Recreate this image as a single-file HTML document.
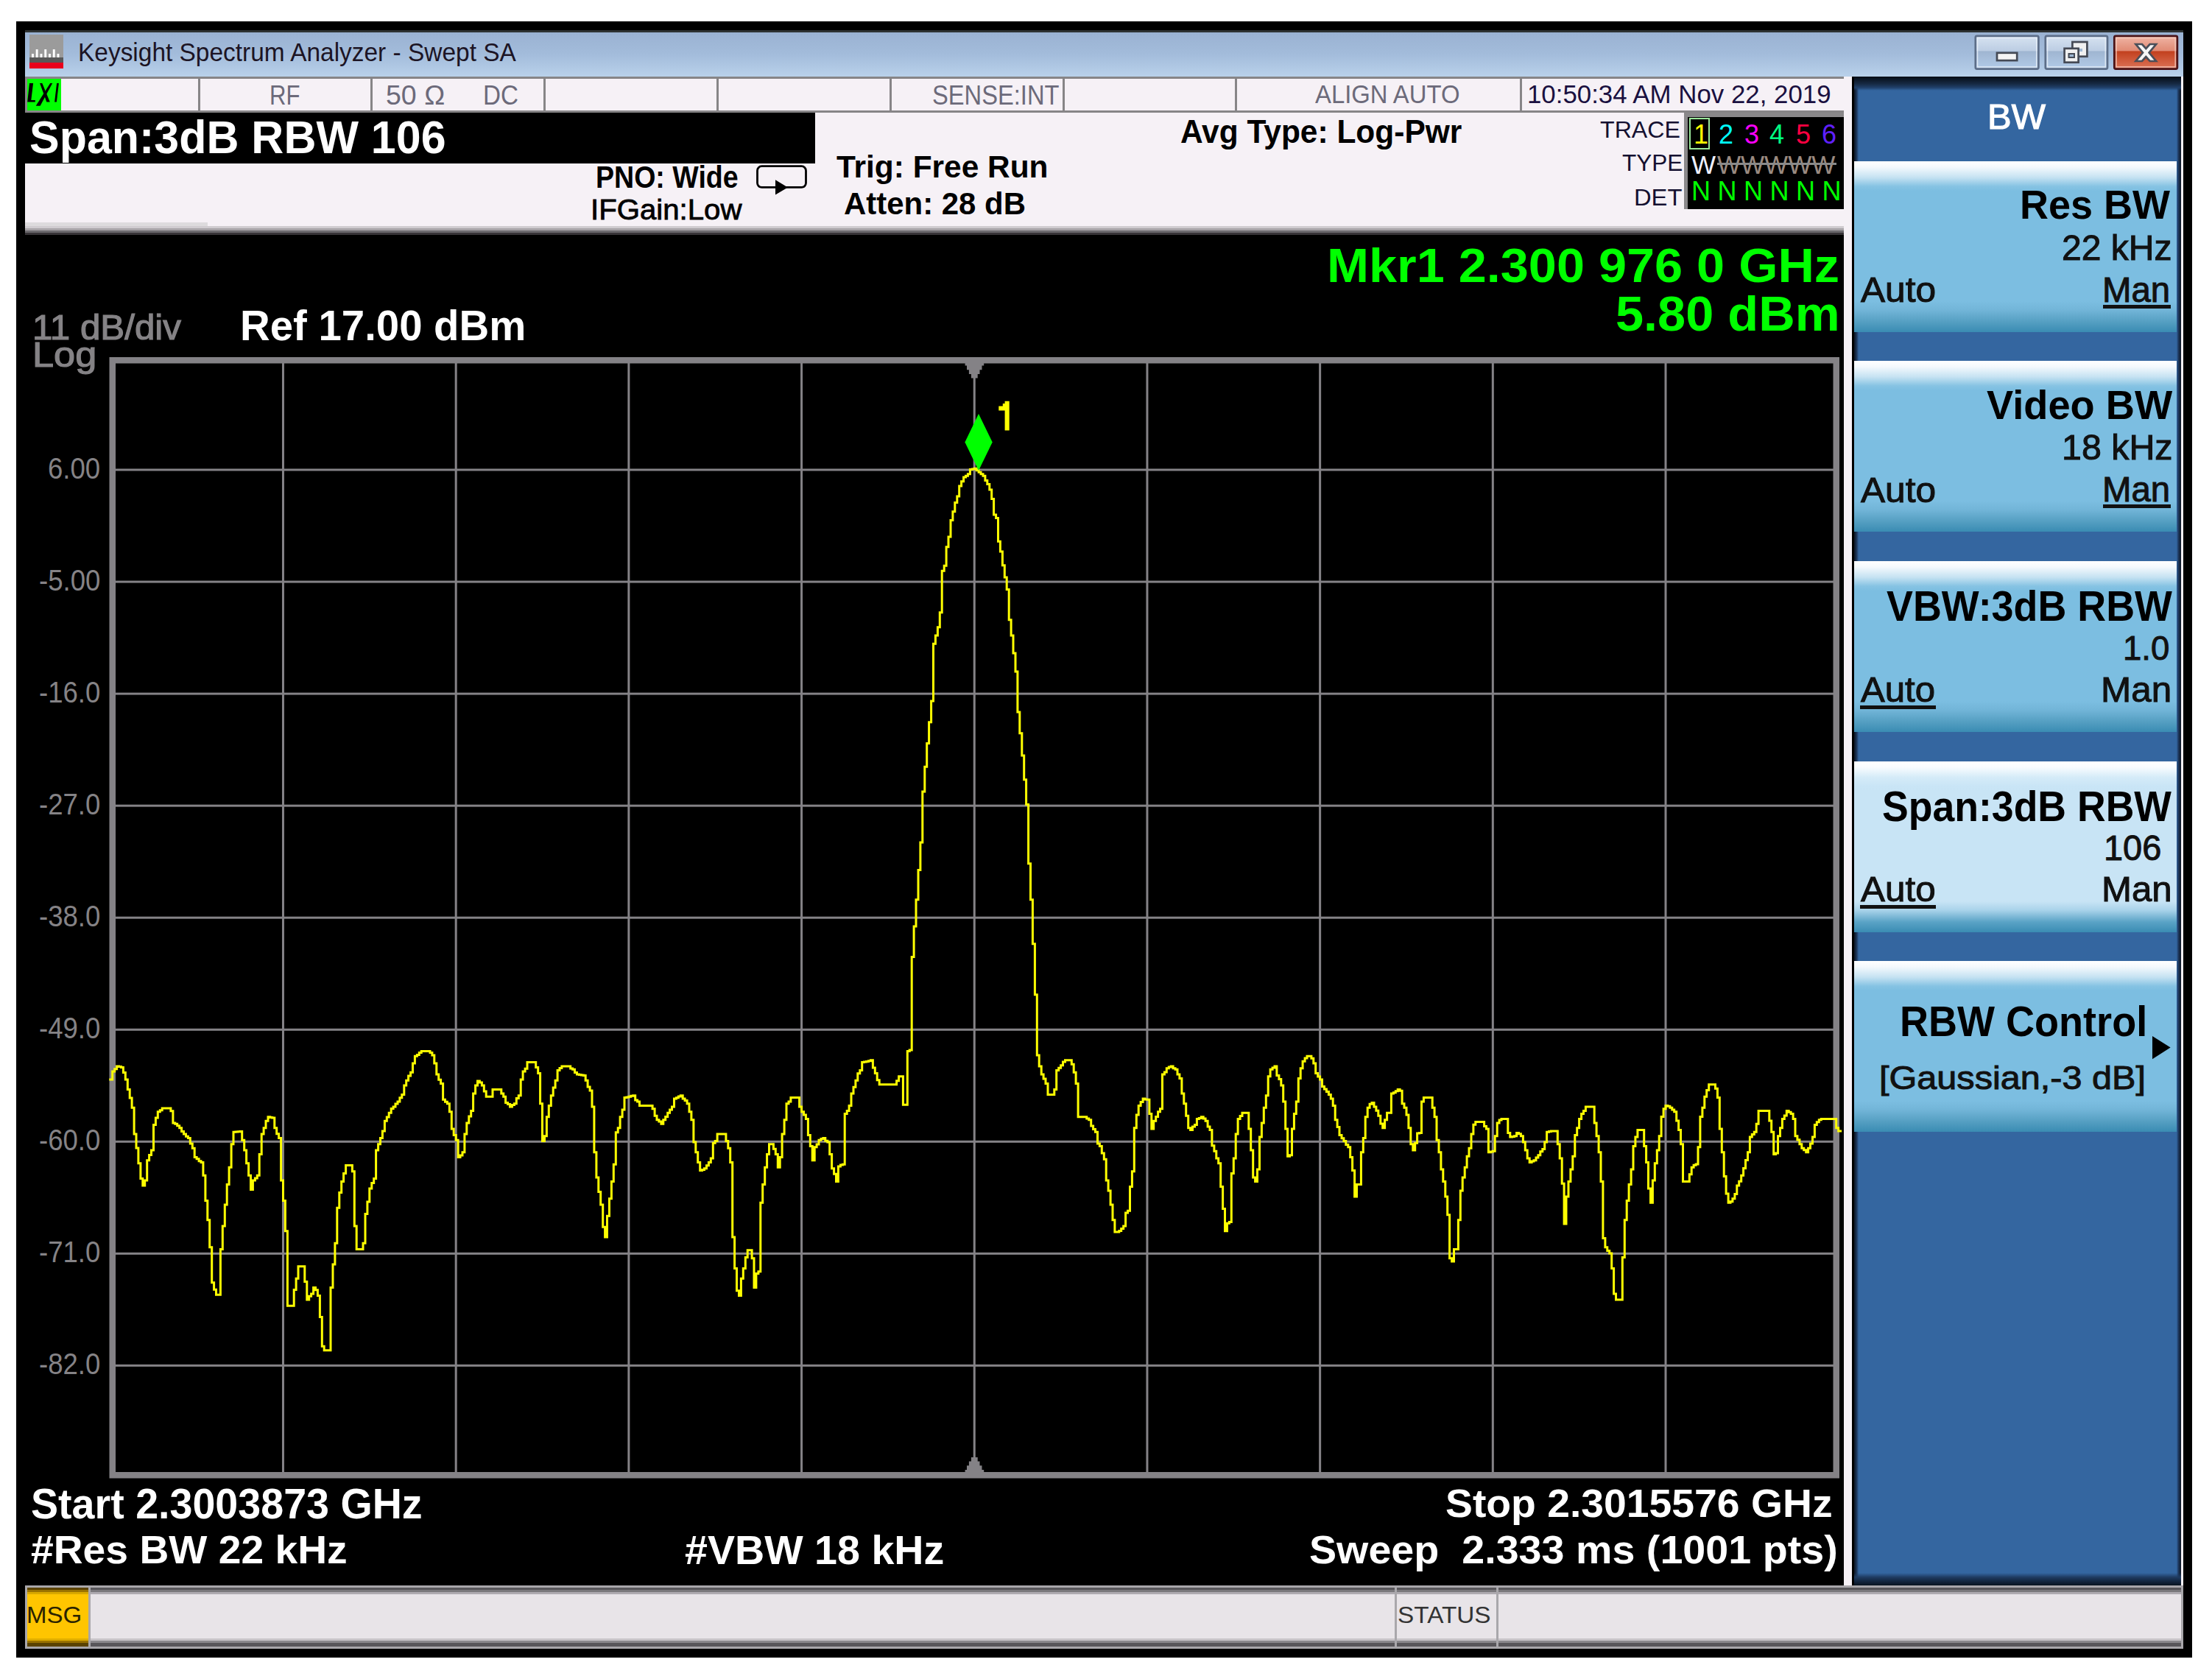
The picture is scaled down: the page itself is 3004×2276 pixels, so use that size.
<!DOCTYPE html>
<html><head><meta charset="utf-8"><style>
html,body{margin:0;padding:0;width:3004px;height:2276px;overflow:hidden;background:#fff;}
body{position:relative;font-family:"Liberation Sans",sans-serif;}
.a{position:absolute;}
.t{position:absolute;white-space:pre;line-height:1;transform-origin:0 0;font-family:"Liberation Sans",sans-serif;}
.btn{position:absolute;left:2518px;width:438px;height:232px;
background:linear-gradient(to bottom,#ffffff 0px,#f4f9fd 8px,#c5e2f2 22px,#86c3e3 34px,#7cbee1 40px,#7cbee1 190px,#72b5d8 202px,#559fc2 218px,#3a8cb3 232px);}
.btn.sel{background:linear-gradient(to bottom,#ffffff 0px,#f8fcff 8px,#d4ebf8 22px,#c9e5f6 34px,#c8e4f5 40px,#c8e4f5 190px,#a9d3ea 202px,#5aa3c6 218px,#3a8cb3 232px);}
</style></head><body>
<!-- frame -->
<div class="a" style="left:22px;top:29px;width:2955px;height:2222px;background:#000"></div>
<!-- title bar -->
<div class="a" style="left:34px;top:41px;width:2931px;height:3px;background:#2e3232"></div>
<div class="a" style="left:34px;top:44px;width:2931px;height:60px;background:linear-gradient(to bottom,#9ab2d2,#a3bcdb 50%,#b9d1ea)"></div>
<!-- app icon -->
<div class="a" style="left:40px;top:47px;width:46px;height:46px;background:#9b9b9b"></div>
<div class="a" style="left:40px;top:78px;width:46px;height:6.5px;background:#585858"></div>
<div class="a" style="left:40px;top:84.5px;width:46px;height:8.5px;background:#e8001c"></div>
<svg class="a" style="left:0;top:0" width="100" height="100">
<rect x="43" y="73" width="2.9" height="5" fill="#fff"/><rect x="48.7" y="67" width="2.9" height="11" fill="#fff"/>
<rect x="54.5" y="73" width="2.9" height="5" fill="#fff"/><rect x="60.3" y="67" width="2.9" height="11" fill="#fff"/>
<rect x="66" y="73" width="2.9" height="5" fill="#fff"/><rect x="71.8" y="67" width="2.9" height="11" fill="#fff"/>
<rect x="77.5" y="73" width="2.9" height="5" fill="#fff"/>
</svg>
<!-- window buttons -->
<svg class="a" style="left:0;top:0" width="3004" height="110">
<defs>
<linearGradient id="wb" x1="0" y1="0" x2="0" y2="1"><stop offset="0" stop-color="#d7e3f1"/><stop offset="0.45" stop-color="#bccde3"/><stop offset="0.47" stop-color="#9fb5d1"/><stop offset="1" stop-color="#b2cbe8"/></linearGradient>
<linearGradient id="cb" x1="0" y1="0" x2="0" y2="1"><stop offset="0" stop-color="#f0b5a5"/><stop offset="0.45" stop-color="#e08a74"/><stop offset="0.47" stop-color="#c2401e"/><stop offset="1" stop-color="#dc7458"/></linearGradient>
</defs>
<rect x="2682.8" y="48.8" width="85.6" height="44.8" rx="2" fill="url(#wb)" stroke="#5d6e88" stroke-width="2.7"/>
<rect x="2685.5" y="51.5" width="80.2" height="39.4" fill="none" stroke="#e8f0f8" stroke-width="1.5" opacity="0.8"/>
<rect x="2777.8" y="48.8" width="84.2" height="44.8" rx="2" fill="url(#wb)" stroke="#5d6e88" stroke-width="2.7"/>
<rect x="2780.5" y="51.5" width="78.8" height="39.4" fill="none" stroke="#e8f0f8" stroke-width="1.5" opacity="0.8"/>
<rect x="2871.3" y="48.8" width="85.6" height="44.8" rx="2" fill="url(#cb)" stroke="#4a1418" stroke-width="2.7"/>
<rect x="2874" y="51.5" width="80.2" height="39.4" fill="none" stroke="#f6d0c4" stroke-width="1.5" opacity="0.8"/>
<rect x="2712" y="71.8" width="27.2" height="10.3" fill="#f4f4f4" stroke="#454a55" stroke-width="2.7"/>
<rect x="2814.4" y="57" width="20" height="19.7" fill="#f0f0f0" stroke="#454a55" stroke-width="2.7"/>
<rect x="2823" y="66" width="5" height="4" fill="#9fb8d4"/>
<rect x="2803.6" y="65.8" width="19" height="18.9" fill="#f0f0f0" stroke="#454a55" stroke-width="2.7"/>
<rect x="2809.5" y="73" width="7.5" height="5" fill="#9fb8d4" stroke="#454a55" stroke-width="2"/>
<path d="M2900.5,60 h8.5 l5.3,6 l5.3,-6 h8.5 l-9.5,11.5 l9.5,11.5 h-8.5 l-5.3,-6 l-5.3,6 h-8.5 l9.5,-11.5 z" fill="#f6f6f6" stroke="#4a4e58" stroke-width="2.7" stroke-linejoin="miter"/>
</svg>
<!-- status row -->
<div class="a" style="left:34px;top:104px;width:2481px;height:3px;background:#878587"></div>
<div class="a" style="left:34px;top:107px;width:2470px;height:44px;background:#f6f1f6"></div>
<div class="a" style="left:34px;top:107px;width:3px;height:46px;background:#878587"></div>
<div class="a" style="left:34px;top:150px;width:2470px;height:3px;background:#878587"></div>
<div class="a" style="left:37px;top:107px;width:46px;height:43px;background:#00ff00"></div>
<svg class="a" style="left:0;top:0" width="100" height="160">
<path d="M40,113 H45.1 L42.3,136 H47.8 V138.6 H37.2 Z" fill="#000"/>
<path d="M54.1,113 H57.3 L67.8,138.4 H63.3 Z" fill="#000"/>
<path d="M68.2,113 H71.2 L54.6,143.8 H48.7 Z" fill="#000"/>
<path d="M77.1,113 H79.9 L76.9,138.4 H74.1 Z" fill="#000"/>
</svg>
<div style="position:absolute;left:268.5px;top:107px;width:3px;height:44px;background:#878587"></div>
<div style="position:absolute;left:502.5px;top:107px;width:3px;height:44px;background:#878587"></div>
<div style="position:absolute;left:737.5px;top:107px;width:3px;height:44px;background:#878587"></div>
<div style="position:absolute;left:972.5px;top:107px;width:3px;height:44px;background:#878587"></div>
<div style="position:absolute;left:1207.5px;top:107px;width:3px;height:44px;background:#878587"></div>
<div style="position:absolute;left:1442.5px;top:107px;width:3px;height:44px;background:#878587"></div>
<div style="position:absolute;left:1676.5px;top:107px;width:3px;height:44px;background:#878587"></div>
<div style="position:absolute;left:2063.5px;top:107px;width:3px;height:44px;background:#878587"></div>
<!-- header area -->
<div class="a" style="left:34px;top:153px;width:2470px;height:166px;background:#f6f1f6"></div>
<div class="a" style="left:34px;top:152.6px;width:1073px;height:69.2px;background:#000"></div>
<div class="a" style="left:34px;top:302px;width:248px;height:5px;background:#dddbdd"></div>
<div class="a" style="left:34px;top:307px;width:2470px;height:12px;background:linear-gradient(to bottom,#d0ccd0 0,#d0ccd0 3px,#a8a4a8 3px,#a8a4a8 6px,#6c6a6e 6px,#6c6a6e 9px,#383438 9px)"></div>
<!-- sweep icon -->
<svg class="a" style="left:0;top:0" width="1200" height="320">
<rect x="1028.5" y="225.7" width="66" height="28.7" rx="6" ry="6" fill="none" stroke="#000" stroke-width="2.8"/>
<path d="M1053,244.2 L1069.9,254.4 L1053,264.5 Z" fill="#000"/>
</svg>
<!-- trace box -->
<div class="a" style="left:2286.7px;top:153px;width:217.3px;height:131.3px;background:#8a888a"></div>
<div class="a" style="left:2291.6px;top:159px;width:212.4px;height:125.3px;background:#000"></div>
<div class="a" style="left:2293.5px;top:160px;width:28.8px;height:42.5px;border:2.5px solid #9be89b;box-sizing:border-box;"></div>
<div class="t" style="left:2300px;top:165px;font-size:36px;color:#ffff00">1</div>
<div class="t" style="left:2334px;top:165px;font-size:36px;color:#00ffff">2</div>
<div class="t" style="left:2369px;top:165px;font-size:36px;color:#ff00ff">3</div>
<div class="t" style="left:2403px;top:165px;font-size:36px;color:#00ff80">4</div>
<div class="t" style="left:2439px;top:165px;font-size:36px;color:#ff0040">5</div>
<div class="t" style="left:2474px;top:165px;font-size:36px;color:#6020ff">6</div>
<div class="t" style="left:2297px;top:206px;font-size:35px;color:#f0f0ff">W</div>
<div class="t" style="left:2332px;top:206px;font-size:35px;color:#9a8a80;transform:scaleX(0.97)">WWWWW</div>
<div class="a" style="left:2332px;top:221px;width:162px;height:2.5px;background:#8a8a8a"></div>
<div class="t" style="left:2297px;top:242px;font-size:36px;color:#00ff00;letter-spacing:9.5px">NNNNNN</div>
<!-- graph svg -->
<svg class="a" style="left:0;top:0" width="3004" height="2276">
<rect x="382.99" y="493" width="3" height="1507" fill="#848286"/>
<rect x="617.68" y="493" width="3" height="1507" fill="#848286"/>
<rect x="852.37" y="493" width="3" height="1507" fill="#848286"/>
<rect x="1087.06" y="493" width="3" height="1507" fill="#848286"/>
<rect x="1321.75" y="493" width="3" height="1507" fill="#848286"/>
<rect x="1556.44" y="493" width="3" height="1507" fill="#848286"/>
<rect x="1791.13" y="493" width="3" height="1507" fill="#848286"/>
<rect x="2025.82" y="493" width="3" height="1507" fill="#848286"/>
<rect x="2260.51" y="493" width="3" height="1507" fill="#848286"/>
<rect x="157" y="636.50" width="2333" height="3" fill="#848286"/>
<rect x="157" y="788.55" width="2333" height="3" fill="#848286"/>
<rect x="157" y="940.60" width="2333" height="3" fill="#848286"/>
<rect x="157" y="1092.65" width="2333" height="3" fill="#848286"/>
<rect x="157" y="1244.70" width="2333" height="3" fill="#848286"/>
<rect x="157" y="1396.75" width="2333" height="3" fill="#848286"/>
<rect x="157" y="1548.80" width="2333" height="3" fill="#848286"/>
<rect x="157" y="1700.85" width="2333" height="3" fill="#848286"/>
<rect x="157" y="1852.90" width="2333" height="3" fill="#848286"/>
<path d="M148.5,485 H2498 V2007.6 H148.5 Z M157,493.5 V1999 H2489.5 V493.5 Z" fill="#848286" fill-rule="evenodd"/>
<path d="M1310.6,493 L1310.6,493 L1310.6,496.4 L1313,496.4 L1313,502.2 L1315.9,502.2 L1315.9,507.9 L1318.9,507.9 L1318.9,513.6 L1327.7,513.6 L1327.7,507.9 L1330.5,507.9 L1330.5,502.2 L1333.5,502.2 L1333.5,496.4 L1336.2,496.4 L1336.2,493 Z" fill="#848286"/>
<path d="M1310.6,1999.5 L1310.6,1999.5 L1310.6,1996.1 L1313,1996.1 L1313,1990.3 L1315.9,1990.3 L1315.9,1984.5 L1318.9,1984.5 L1318.9,1978.9 L1327.7,1978.9 L1327.7,1984.5 L1330.5,1984.5 L1330.5,1990.3 L1333.5,1990.3 L1333.5,1996.1 L1336.2,1996.1 L1336.2,1999.5 Z" fill="#848286"/>
<path d="M149.8,1465.9H152.7V1455.0H155.7V1451.7H158.6V1448.0H161.5V1448.5H164.5V1449.4H167.4V1456.6H170.3V1465.9H173.3V1479.6H176.2V1490.9H179.1V1504.3H182.1V1540.0H185.0V1559.0H187.9V1579.8H190.9V1600.4H193.8V1610.0H196.7V1603.0H199.7V1575.7H202.6V1568.4H205.5V1562.0H208.5V1527.6H211.4V1518.0H214.3V1509.8H217.3V1507.8H220.2V1505.0H223.1V1505.0H226.1V1505.0H229.0V1505.0H231.9V1508.7H234.9V1524.9H237.8V1526.3H240.7V1528.8H243.7V1531.8H246.6V1536.4H249.5V1540.0H252.5V1543.2H255.4V1545.5H258.3V1553.0H261.3V1559.2H264.2V1571.6H267.1V1573.8H270.1V1576.7H273.0V1578.4H275.9V1596.3H278.9V1630.6H281.8V1656.7H284.7V1693.7H287.7V1741.8H290.6V1751.3H293.5V1758.2H296.5V1758.2H299.4V1696.5H302.3V1664.9H305.3V1636.0H308.2V1608.6H311.1V1585.3H314.1V1553.7H317.0V1537.3H319.9V1537.1H322.9V1536.8H325.8V1536.4H328.7V1548.2H331.7V1562.0H334.6V1579.8H337.6V1596.3H340.5V1615.5H343.4V1603.1H346.4V1600.1H349.3V1596.3H352.2V1567.4H355.2V1540.0H358.1V1531.8H361.0V1522.2H364.0V1516.7H366.9V1517.4H369.8V1518.0H372.8V1531.8H375.7V1539.7H378.6V1545.5H381.6V1603.1H384.5V1630.6H387.4V1671.8H390.4V1773.3H393.3V1773.3H396.2V1773.3H399.2V1751.4H402.1V1736.3H405.0V1719.8H408.0V1719.8H410.9V1719.8H413.8V1740.4H416.8V1765.0H419.7V1760.3H422.6V1756.9H425.6V1748.6H428.5V1751.8H431.4V1759.6H434.4V1788.4H437.3V1828.2H440.2V1833.7H443.2V1833.7H446.1V1833.7H449.0V1748.6H452.0V1717.0H454.9V1688.2H457.8V1640.2H460.8V1619.6H463.7V1604.5H466.6V1593.5H469.6V1582.5H472.5V1582.5H475.4V1582.5H478.4V1590.8H481.3V1664.9H484.2V1696.5H487.2V1696.5H490.1V1696.5H493.0V1688.2H496.0V1648.4H498.9V1632.0H501.8V1614.1H504.8V1606.4H507.7V1600.4H510.6V1562.0H513.6V1553.7H516.5V1545.5H519.4V1535.9H522.4V1522.2H525.3V1516.9H528.2V1511.2H531.2V1505.6H534.1V1502.9H537.0V1498.9H540.0V1496.1H542.9V1490.7H545.8V1486.5H548.8V1474.1H551.7V1467.3H554.6V1460.9H557.6V1456.3H560.5V1443.9H563.4V1434.3H566.4V1432.5H569.3V1429.5H572.2V1427.4H575.2V1427.4H578.1V1427.4H581.0V1427.4H584.0V1429.5H586.9V1432.9H589.8V1443.9H592.8V1459.0H595.7V1466.2H598.6V1471.4H601.6V1493.3H604.5V1496.2H607.4V1498.8H610.4V1509.8H613.3V1533.1H616.2V1541.6H619.2V1548.2H622.1V1571.6H625.0V1569.1H628.0V1564.7H630.9V1540.0H633.8V1524.9H636.8V1515.9H639.7V1508.4H642.6V1485.1H645.6V1474.1H648.5V1468.1H651.4V1470.1H654.4V1474.1H657.3V1482.1H660.2V1489.2H663.2V1489.2H666.1V1489.2H669.0V1479.6H672.0V1479.6H674.9V1479.6H677.8V1479.6H680.8V1485.1H683.7V1489.2H686.6V1497.4H689.6V1499.5H692.5V1502.9H695.4V1500.4H698.4V1498.8H701.3V1491.4H704.3V1487.8H707.2V1465.9H710.1V1454.9H713.1V1451.3H716.0V1442.5H718.9V1442.5H721.9V1442.5H724.8V1442.5H727.7V1449.4H730.7V1457.6H733.6V1498.8H736.5V1549.6H739.5V1542.7H742.4V1516.7H745.3V1501.6H748.3V1487.8H751.2V1476.9H754.1V1467.3H757.1V1453.5H760.0V1450.6H762.9V1448.0H765.9V1448.0H768.8V1448.0H771.7V1448.0H774.7V1450.9H777.6V1452.2H780.5V1456.4H783.5V1459.0H786.4V1459.5H789.3V1460.0H792.3V1460.4H795.2V1467.3H798.1V1476.0H801.1V1481.0H804.0V1503.1H806.9V1564.7H809.9V1599.0H812.8V1618.5H815.7V1636.1H818.7V1666.3H821.6V1680.0H824.5V1651.2H827.5V1627.8H830.4V1604.5H833.3V1581.2H836.3V1537.7H839.2V1531.8H842.1V1516.7H845.1V1507.1H848.0V1490.6H850.9V1490.0H853.9V1489.2H856.8V1488.3H859.7V1487.8H862.7V1493.9H865.6V1496.1H868.5V1501.6H871.5V1501.6H874.4V1501.6H877.3V1501.6H880.3V1501.6H883.2V1501.6H886.1V1505.7H889.1V1515.3H892.0V1520.8H894.9V1522.9H897.9V1526.3H900.8V1520.8H903.7V1516.4H906.7V1511.2H909.6V1506.9H912.5V1502.9H915.5V1492.0H918.4V1490.7H921.3V1488.9H924.3V1487.8H927.2V1492.0H930.1V1494.5H933.1V1498.8H936.0V1509.8H938.9V1520.8H941.9V1551.0H944.8V1564.7H947.7V1578.4H950.7V1589.4H953.6V1588.6H956.5V1586.7H959.5V1582.7H962.4V1578.4H965.3V1572.9H968.3V1552.2H971.2V1549.6H974.1V1540.0H977.1V1540.0H980.0V1540.0H982.9V1540.0H985.9V1549.6H988.8V1559.2H991.7V1578.4H994.7V1680.0H997.6V1722.5H1000.5V1752.7H1003.5V1759.6H1006.4V1736.3H1009.3V1722.5H1012.3V1707.4H1015.2V1697.8H1018.1V1697.8H1021.1V1708.8H1024.0V1748.6H1026.9V1729.4H1029.9V1726.7H1032.8V1633.3H1035.7V1608.6H1038.7V1585.3H1041.6V1567.4H1044.5V1553.7H1047.5V1553.7H1050.4V1560.3H1053.3V1567.4H1056.3V1585.3H1059.2V1571.6H1062.1V1540.0H1065.1V1520.8H1068.0V1498.8H1071.0V1495.9H1073.9V1490.6H1076.8V1490.6H1079.8V1490.6H1082.7V1490.6H1085.6V1502.9H1088.6V1509.8H1091.5V1514.1H1094.4V1519.4H1097.4V1541.4H1100.3V1556.5H1103.2V1575.7H1106.2V1557.8H1109.1V1554.0H1112.0V1548.2H1115.0V1546.6H1117.9V1545.5H1120.8V1549.3H1123.8V1551.0H1126.7V1567.4H1129.6V1586.7H1132.6V1594.2H1135.5V1604.5H1138.4V1583.9H1141.4V1582.1H1144.3V1581.2H1147.2V1512.5H1150.2V1508.4H1153.1V1501.6H1156.0V1485.1H1159.0V1476.3H1161.9V1467.3H1164.8V1457.8H1167.8V1453.5H1170.7V1442.5H1173.6V1442.1H1176.6V1441.4H1179.5V1440.7H1182.4V1439.8H1185.4V1450.1H1188.3V1457.6H1191.2V1466.7H1194.2V1472.7H1197.1V1472.7H1200.0V1472.7H1203.0V1472.7H1205.9V1472.7H1208.8V1472.7H1211.8V1472.7H1214.7V1472.7H1217.6V1467.8H1220.6V1461.8H1223.5V1461.8H1226.4V1500.2H1229.4V1500.2H1232.3V1427.4H1235.2V1426.1H1238.2V1299.4H1241.1V1258.0H1244.0V1221.7H1247.0V1181.6H1249.9V1144.0H1252.8V1075.1H1255.8V1041.3H1258.7V1009.6H1261.6V980.8H1264.6V952.0H1267.5V874.3H1270.4V863.0H1273.4V851.8H1276.3V831.7H1279.2V775.3H1282.2V768.3H1285.1V742.8H1288.0V729.0H1291.0V706.4H1293.9V694.7H1296.8V682.6H1299.8V673.9H1302.7V660.1H1305.6V653.8H1308.6V648.1H1311.5V646.3H1314.4V643.8H1317.4V637.5H1320.3V636.9H1323.2V636.3H1326.2V638.8H1329.1V641.3H1332.0V643.7H1335.0V646.3H1337.9V652.6H1340.8V657.6H1343.8V665.1H1346.7V677.6H1349.6V698.9H1352.6V703.5H1355.5V735.3H1358.4V749.0H1361.4V767.8H1364.3V784.1H1367.2V800.4H1370.2V841.7H1373.1V863.0H1376.0V886.9H1379.0V911.9H1381.9V967.0H1384.8V995.8H1387.8V1025.9H1390.7V1058.8H1393.6V1092.6H1396.6V1172.8H1399.5V1221.7H1402.4V1281.8H1405.4V1350.7H1408.3V1432.9H1411.2V1448.0H1414.2V1459.0H1417.1V1465.0H1420.0V1471.4H1423.0V1486.5H1425.9V1486.5H1428.8V1486.5H1431.8V1479.6H1434.7V1453.5H1437.7V1450.3H1440.6V1446.7H1443.5V1442.1H1446.5V1439.8H1449.4V1439.8H1452.3V1439.8H1455.3V1445.3H1458.2V1456.3H1461.1V1471.4H1464.1V1516.7H1467.0V1516.7H1469.9V1516.7H1472.9V1516.7H1475.8V1519.0H1478.7V1520.8H1481.7V1529.0H1484.6V1533.4H1487.5V1537.3H1490.5V1552.9H1493.4V1556.5H1496.3V1566.1H1499.3V1574.3H1502.2V1603.1H1505.1V1616.9H1508.1V1636.1H1511.0V1656.7H1513.9V1673.1H1516.9V1673.1H1519.8V1671.4H1522.7V1668.5H1525.7V1664.9H1528.6V1647.0H1531.5V1644.3H1534.5V1611.4H1537.4V1590.8H1540.3V1531.8H1543.3V1513.9H1546.2V1501.6H1549.1V1496.5H1552.1V1492.0H1555.0V1492.9H1557.9V1493.3H1560.9V1512.5H1563.8V1533.1H1566.7V1522.2H1569.7V1516.6H1572.6V1509.8H1575.5V1505.7H1578.5V1459.0H1581.4V1455.9H1584.3V1450.8H1587.3V1449.1H1590.2V1448.0H1593.1V1450.8H1596.1V1452.2H1599.0V1459.0H1601.9V1464.5H1604.9V1485.1H1607.8V1498.8H1610.7V1515.3H1613.7V1531.8H1616.6V1534.5H1619.5V1530.1H1622.5V1527.6H1625.4V1519.4H1628.3V1518.5H1631.3V1516.7H1634.2V1518.9H1637.1V1522.2H1640.1V1529.9H1643.0V1534.5H1645.9V1555.8H1648.9V1563.3H1651.8V1572.9H1654.7V1579.8H1657.7V1611.4H1660.6V1641.6H1663.5V1671.8H1666.5V1661.3H1669.4V1659.4H1672.3V1593.5H1675.3V1572.9H1678.2V1540.0H1681.1V1519.4H1684.1V1515.5H1687.0V1511.2H1689.9V1511.2H1692.9V1511.2H1695.8V1533.1H1698.7V1562.0H1701.7V1599.0H1704.6V1604.5H1707.5V1588.0H1710.5V1544.1H1713.4V1524.9H1716.3V1504.3H1719.3V1487.8H1722.2V1461.8H1725.1V1452.2H1728.1V1449.9H1731.0V1448.0H1733.9V1460.4H1736.9V1465.6H1739.8V1474.1H1742.7V1496.1H1745.7V1533.1H1748.6V1570.2H1751.5V1568.8H1754.5V1533.1H1757.4V1512.5H1760.3V1496.1H1763.3V1464.5H1766.2V1450.8H1769.1V1441.2H1772.1V1437.1H1775.0V1434.3H1777.9V1434.3H1780.9V1437.2H1783.8V1443.9H1786.7V1457.6H1789.7V1462.0H1792.6V1465.9H1795.5V1475.5H1798.5V1479.0H1801.4V1482.4H1804.4V1486.6H1807.3V1492.0H1810.2V1501.6H1813.2V1520.8H1816.1V1530.4H1819.0V1541.4H1822.0V1545.8H1824.9V1549.6H1827.8V1554.5H1830.8V1557.8H1833.7V1571.6H1836.6V1589.4H1839.6V1625.1H1842.5V1608.6H1845.4V1608.6H1848.4V1564.7H1851.3V1545.5H1854.2V1516.7H1857.2V1504.3H1860.1V1499.3H1863.0V1497.4H1866.0V1502.9H1868.9V1508.2H1871.8V1515.3H1874.8V1525.9H1877.7V1531.8H1880.6V1520.8H1883.6V1511.2H1886.5V1511.2H1889.4V1485.1H1892.4V1483.8H1895.3V1481.8H1898.2V1479.6H1901.2V1481.3H1904.1V1498.8H1907.0V1504.3H1910.0V1513.9H1912.9V1531.8H1915.8V1553.7H1918.8V1562.0H1921.7V1552.3H1924.6V1539.1H1927.6V1538.6H1930.5V1496.1H1933.4V1490.6H1936.4V1490.6H1939.3V1490.6H1942.2V1490.6H1945.2V1504.3H1948.1V1516.7H1951.0V1548.2H1954.0V1564.7H1956.9V1588.0H1959.8V1604.5H1962.8V1625.1H1965.7V1649.8H1968.6V1708.8H1971.6V1712.9H1974.5V1696.5H1977.4V1696.5H1980.4V1656.7H1983.3V1616.9H1986.2V1599.0H1989.2V1585.3H1992.1V1570.2H1995.0V1559.2H1998.0V1540.0H2000.9V1527.3H2003.8V1523.5H2006.8V1523.5H2009.7V1523.5H2012.6V1523.5H2015.6V1529.5H2018.5V1533.1H2021.4V1564.7H2024.4V1564.1H2027.3V1563.3H2030.2V1542.7H2033.2V1524.9H2036.1V1521.0H2039.0V1519.4H2042.0V1519.4H2044.9V1519.4H2047.8V1538.6H2050.8V1544.1H2053.7V1543.5H2056.6V1542.7H2059.6V1538.6H2062.5V1539.7H2065.4V1542.7H2068.4V1551.0H2071.3V1562.1H2074.2V1572.9H2077.2V1578.4H2080.1V1577.1H2083.0V1575.7H2086.0V1571.9H2088.9V1568.8H2091.8V1563.7H2094.8V1560.6H2097.7V1551.0H2100.6V1537.3H2103.6V1536.6H2106.5V1535.9H2109.4V1535.9H2112.4V1535.9H2115.3V1553.7H2118.2V1572.9H2121.2V1607.2H2124.1V1662.1H2127.0V1625.1H2130.0V1604.5H2132.9V1588.0H2135.8V1570.2H2138.8V1541.4H2141.7V1531.8H2144.6V1519.4H2147.6V1512.5H2150.5V1508.6H2153.4V1502.9H2156.4V1502.9H2159.3V1502.9H2162.2V1502.9H2165.2V1524.9H2168.1V1542.7H2171.1V1564.7H2174.0V1604.5H2176.9V1681.4H2179.9V1693.7H2182.8V1698.5H2185.7V1702.0H2188.7V1722.5H2191.6V1756.9H2194.5V1765.1H2197.5V1765.1H2200.4V1765.1H2203.3V1707.4H2206.3V1656.7H2209.2V1630.6H2212.1V1608.6H2215.1V1588.0H2218.0V1556.5H2220.9V1544.1H2223.9V1534.5H2226.8V1534.5H2229.7V1534.5H2232.7V1556.5H2235.6V1578.4H2238.5V1614.1H2241.5V1633.3H2244.4V1603.1H2247.3V1579.7H2250.3V1561.9H2253.2V1542.7H2256.1V1516.6H2259.1V1505.7H2262.0V1501.5H2264.9V1502.3H2267.9V1504.3H2270.8V1506.9H2273.7V1509.8H2276.7V1522.1H2279.6V1534.5H2282.5V1553.7H2285.5V1604.4H2288.4V1604.4H2291.3V1604.4H2294.3V1594.7H2297.2V1585.2H2300.1V1582.3H2303.1V1581.1H2306.0V1557.8H2308.9V1516.6H2311.9V1504.3H2314.8V1489.2H2317.7V1480.4H2320.7V1472.7H2323.6V1472.7H2326.5V1472.7H2329.5V1478.2H2332.4V1490.6H2335.3V1533.1H2338.3V1564.7H2341.2V1597.6H2344.1V1620.9H2347.1V1633.3H2350.0V1631.7H2352.9V1627.8H2355.9V1621.5H2358.8V1609.9H2361.7V1604.2H2364.7V1596.2H2367.6V1586.6H2370.5V1575.6H2373.5V1564.7H2376.4V1544.1H2379.3V1540.6H2382.3V1537.2H2385.2V1526.2H2388.1V1508.4H2391.1V1508.4H2394.0V1508.4H2396.9V1508.4H2399.9V1508.4H2402.8V1522.1H2405.7V1537.2H2408.7V1567.4H2411.6V1566.0H2414.5V1542.7H2417.5V1531.7H2420.4V1519.4H2423.3V1515.0H2426.3V1508.4H2429.2V1510.3H2432.1V1512.5H2435.1V1519.4H2438.0V1542.7H2440.9V1547.8H2443.9V1553.7H2446.8V1559.2H2449.7V1561.7H2452.7V1564.7H2455.6V1559.2H2458.5V1552.9H2461.5V1544.1H2464.4V1527.6H2467.3V1523.8H2470.3V1520.7H2473.2V1519.4H2476.1V1519.4H2479.1V1519.4H2482.0V1519.4H2484.9V1519.4H2487.9V1519.4H2490.8V1519.4H2493.7V1531.7H2496.7V1536.0H2499.6" fill="none" stroke="#ffff00" stroke-width="3" stroke-linecap="square"/>
<path d="M1329,562 L1347.7,600.4 L1329,639 L1310.4,600.4 Z" fill="#00ff00"/>
</svg>
<svg class="a" style="left:0;top:0" width="1400" height="600"><path d="M1356.3,551.5 H1361.8 V548 H1364.6 V544.8 H1370.7 V584.6 H1364.6 V557.5 H1356.3 Z" fill="#ffff00"/></svg>
<!-- right panel -->
<div class="a" style="left:2504px;top:104px;width:11px;height:2049px;background:#f6f1f6"></div>
<div class="a" style="left:2515px;top:104px;width:3px;height:2049px;background:#000"></div>
<div class="a" style="left:2518px;top:104px;width:444px;height:2049px;background:linear-gradient(to bottom,#060c14 0,#0c1828 4px,#162a44 10px,#20406a 15px,rgba(52,102,160,0) 19px) top/100% 19px no-repeat,linear-gradient(to top,#0a1420 0,#12243c 5px,#1e3a60 11px,rgba(52,102,160,0) 17px) bottom/100% 17px no-repeat,linear-gradient(to right,#0c1624 0,#1a3050 3px,#284e80 5px,rgba(52,102,160,0) 6px) left/6px 100% no-repeat,linear-gradient(to left,#0c1624 0,#1a3050 3px,#284e80 5px,rgba(52,102,160,0) 6px) right/6px 100% no-repeat,#3466a0"></div>
<div class="a" style="left:2962px;top:104px;width:3px;height:2049px;background:#f6f1f6"></div>
<div class="btn" style="top:218.7px"></div>
<div class="btn" style="top:490.3px"></div>
<div class="btn" style="top:761.9px"></div>
<div class="btn sel" style="top:1033.5px"></div>
<div class="btn" style="top:1305.1px"></div>
<div style="position:absolute;left:2856px;top:413.6px;width:91.5px;height:5px;background:#111"></div>
<div style="position:absolute;left:2856px;top:685.2px;width:91.5px;height:5px;background:#111"></div>
<div style="position:absolute;left:2526px;top:957.5px;width:102.90000000000009px;height:5px;background:#111"></div>
<div style="position:absolute;left:2526px;top:1229.1px;width:102.90000000000009px;height:5px;background:#111"></div>
<svg class="a" style="left:0;top:0" width="3004" height="1500"><path d="M2923,1407 L2947.6,1422.4 L2923,1438.2 Z" fill="#000"/></svg>
<!-- bottom status bar -->
<div class="a" style="left:34px;top:2153px;width:2931px;height:86px;background:#a9a7ab"></div>
<div class="a" style="left:37px;top:2156px;width:2925px;height:80px;background:linear-gradient(to bottom,#58565a 0,#58565a 3px,#7a787c 3px,#7a787c 6px,#aeaab0 6px,#aeaab0 9px,#e8e4e8 9px,#e8e4e8 69px,#c8c4c8 69px,#c8c4c8 72px,#8a888c 72px,#8a888c 75px,#58565a 75px)"></div>
<div class="a" style="left:37.2px;top:2156px;width:82.7px;height:80px;background:linear-gradient(to bottom,#5a4200 0,#5a4200 3px,#9a7200 3px,#9a7200 6px,#d8a800 6px,#d8a800 9px,#ffc500 9px,#ffc500 69px,#e0ae00 69px,#e0ae00 72px,#9a7200 72px,#9a7200 75px,#5a4200 75px)"></div>
<div class="a" style="left:119.9px;top:2153px;width:3px;height:86px;background:#a9a7ab"></div>
<div class="a" style="left:1894px;top:2153px;width:3.2px;height:86px;background:#a9a7ab"></div>
<div class="a" style="left:2031.9px;top:2153px;width:2.7px;height:86px;background:#a9a7ab"></div>
<span class="t" style="left:105.8px;top:53.5px;font-size:35.78px;font-weight:400;color:#1c1424;transform:scaleX(0.9351);">Keysight Spectrum Analyzer - Swept SA</span>
<span class="t" style="left:366.4px;top:112.3px;font-size:36.06px;font-weight:400;color:#6c6a7a;transform:scaleX(0.8636);">RF</span>
<span class="t" style="left:523.9px;top:112.3px;font-size:36.06px;font-weight:400;color:#6c6a7a;transform:scaleX(1.0411);">50 Ω</span>
<span class="t" style="left:656.0px;top:112.3px;font-size:36.06px;font-weight:400;color:#6c6a7a;transform:scaleX(0.9208);">DC</span>
<span class="t" style="left:1266.4px;top:112.3px;font-size:36.06px;font-weight:400;color:#6c6a7a;transform:scaleX(0.9064);">SENSE:INT</span>
<span class="t" style="left:1785.9px;top:110.8px;font-size:35.78px;font-weight:400;color:#6c6a7a;transform:scaleX(0.9179);">ALIGN AUTO</span>
<span class="t" style="left:2073.5px;top:110.8px;font-size:35.78px;font-weight:400;color:#1a1040;transform:scaleX(0.9740);">10:50:34 AM Nov 22, 2019</span>
<span class="t" style="left:40.2px;top:155.5px;font-size:62.21px;font-weight:700;color:#fff;transform:scaleX(0.9798);">Span:3dB RBW 106</span>
<span class="t" style="left:809.0px;top:219.1px;font-size:43.32px;font-weight:700;color:#000;transform:scaleX(0.8667);">PNO: Wide</span>
<span class="t" style="left:801.6px;top:265.3px;font-size:39.54px;font-weight:400;color:#000;transform:scaleX(1.0162);-webkit-text-stroke:0.8px #000;">IFGain:Low</span>
<span class="t" style="left:1135.7px;top:205.6px;font-size:42.15px;font-weight:700;color:#000;transform:scaleX(1.0064);">Trig: Free Run</span>
<span class="t" style="left:1146.0px;top:255.3px;font-size:43.32px;font-weight:700;color:#000;transform:scaleX(0.9683);">Atten: 28 dB</span>
<span class="t" style="left:1602.8px;top:157.2px;font-size:43.91px;font-weight:700;color:#000;transform:scaleX(0.9675);">Avg Type: Log-Pwr</span>
<span class="t" style="left:2173.4px;top:159.6px;font-size:31.98px;font-weight:400;color:#141030;transform:scaleX(1.0057);">TRACE</span>
<span class="t" style="left:2202.7px;top:205.2px;font-size:31.98px;font-weight:400;color:#141030;transform:scaleX(0.9852);">TYPE</span>
<span class="t" style="left:2218.5px;top:251.6px;font-size:31.98px;font-weight:400;color:#141030;transform:scaleX(1.0233);">DET</span>
<span class="t" style="left:44.2px;top:420.6px;font-size:47.72px;font-weight:400;color:#858386;transform:scaleX(1.0335);-webkit-text-stroke:1.2px #858386;">11 dB/div</span>
<span class="t" style="left:43.9px;top:457.9px;font-size:47.72px;font-weight:400;color:#858386;transform:scaleX(1.0959);-webkit-text-stroke:1.2px #858386;">Log</span>
<span class="t" style="left:325.9px;top:414.0px;font-size:57.56px;font-weight:700;color:#fff;transform:scaleX(0.9792);">Ref 17.00 dBm</span>
<span class="t" style="left:1801.5px;top:328.8px;font-size:64.84px;font-weight:700;color:#00ff00;transform:scaleX(1.0554);">Mkr1 2.300 976 0 GHz</span>
<span class="t" style="left:2193.5px;top:393.3px;font-size:66.57px;font-weight:700;color:#00ff00;transform:scaleX(1.0290);">5.80 dBm</span>
<span class="t" style="left:64.9px;top:614.8px;font-size:41.57px;font-weight:400;color:#858386;transform:scaleX(0.8800);">6.00</span>
<span class="t" style="left:52.6px;top:766.8px;font-size:41.57px;font-weight:400;color:#858386;transform:scaleX(0.8800);">-5.00</span>
<span class="t" style="left:52.6px;top:918.9px;font-size:41.57px;font-weight:400;color:#858386;transform:scaleX(0.8800);">-16.0</span>
<span class="t" style="left:52.6px;top:1071.0px;font-size:41.57px;font-weight:400;color:#858386;transform:scaleX(0.8800);">-27.0</span>
<span class="t" style="left:52.6px;top:1223.0px;font-size:41.57px;font-weight:400;color:#858386;transform:scaleX(0.8800);">-38.0</span>
<span class="t" style="left:52.6px;top:1375.0px;font-size:41.57px;font-weight:400;color:#858386;transform:scaleX(0.8800);">-49.0</span>
<span class="t" style="left:52.6px;top:1527.1px;font-size:41.57px;font-weight:400;color:#858386;transform:scaleX(0.8800);">-60.0</span>
<span class="t" style="left:52.6px;top:1679.2px;font-size:41.57px;font-weight:400;color:#858386;transform:scaleX(0.8800);">-71.0</span>
<span class="t" style="left:52.6px;top:1831.2px;font-size:41.57px;font-weight:400;color:#858386;transform:scaleX(0.8800);">-82.0</span>
<span class="t" style="left:42.2px;top:2014.4px;font-size:57.29px;font-weight:700;color:#fff;transform:scaleX(0.9708);">Start 2.3003873 GHz</span>
<span class="t" style="left:41.7px;top:2078.0px;font-size:54.36px;font-weight:700;color:#fff;transform:scaleX(1.0160);">#Res BW 22 kHz</span>
<span class="t" style="left:929.6px;top:2078.0px;font-size:55.23px;font-weight:700;color:#fff;transform:scaleX(1.0069);">#VBW 18 kHz</span>
<span class="t" style="left:1963.3px;top:2014.9px;font-size:54.36px;font-weight:700;color:#fff;transform:scaleX(1.0172);">Stop 2.3015576 GHz</span>
<span class="t" style="left:1777.5px;top:2077.0px;font-size:54.07px;font-weight:700;color:#fff;transform:scaleX(1.0294);">Sweep  2.333 ms (1001 pts)</span>
<span class="t" style="left:2699.4px;top:135.4px;font-size:47.97px;font-weight:400;color:#fff;transform:scaleX(1.0205);-webkit-text-stroke:1.2px #fff;">BW</span>
<span class="t" style="left:2743.1px;top:251.4px;font-size:54.99px;font-weight:700;color:#000;transform:scaleX(0.9813);">Res BW</span>
<span class="t" style="left:2799.5px;top:311.6px;font-size:48.55px;font-weight:400;color:#111;transform:scaleX(0.9891);-webkit-text-stroke:1px #111;">22 kHz</span>
<span class="t" style="left:2527.3px;top:370.0px;font-size:47.39px;font-weight:400;color:#111;transform:scaleX(1.0474);-webkit-text-stroke:1px #111;">Auto</span>
<span class="t" style="left:2855.0px;top:369.6px;font-size:47.72px;font-weight:400;color:#111;transform:scaleX(0.9930);-webkit-text-stroke:1px #111;">Man</span>
<span class="t" style="left:2698.2px;top:523.0px;font-size:54.99px;font-weight:700;color:#000;transform:scaleX(0.9862);">Video BW</span>
<span class="t" style="left:2799.6px;top:583.2px;font-size:48.55px;font-weight:400;color:#111;transform:scaleX(0.9959);-webkit-text-stroke:1px #111;">18 kHz</span>
<span class="t" style="left:2527.3px;top:641.6px;font-size:47.39px;font-weight:400;color:#111;transform:scaleX(1.0474);-webkit-text-stroke:1px #111;">Auto</span>
<span class="t" style="left:2855.0px;top:641.2px;font-size:47.72px;font-weight:400;color:#111;transform:scaleX(0.9930);-webkit-text-stroke:1px #111;">Man</span>
<span class="t" style="left:2561.9px;top:794.8px;font-size:56.98px;font-weight:700;color:#000;transform:scaleX(0.9452);">VBW:3dB RBW</span>
<span class="t" style="left:2882.7px;top:856.0px;font-size:47.09px;font-weight:400;color:#111;transform:scaleX(0.9667);-webkit-text-stroke:1px #111;">1.0</span>
<span class="t" style="left:2527.4px;top:913.4px;font-size:47.44px;font-weight:400;color:#111;transform:scaleX(1.0354);-webkit-text-stroke:1px #111;">Auto</span>
<span class="t" style="left:2853.4px;top:913.4px;font-size:47.44px;font-weight:400;color:#111;transform:scaleX(1.0424);-webkit-text-stroke:1px #111;">Man</span>
<span class="t" style="left:2556.1px;top:1067.0px;font-size:57.29px;font-weight:700;color:#000;transform:scaleX(0.9354);">Span:3dB RBW</span>
<span class="t" style="left:2856.9px;top:1126.6px;font-size:48.55px;font-weight:400;color:#111;transform:scaleX(0.9667);-webkit-text-stroke:1px #111;">106</span>
<span class="t" style="left:2527.4px;top:1184.0px;font-size:47.72px;font-weight:400;color:#111;transform:scaleX(1.0354);-webkit-text-stroke:1px #111;">Auto</span>
<span class="t" style="left:2853.5px;top:1184.0px;font-size:47.72px;font-weight:400;color:#111;transform:scaleX(1.0302);-webkit-text-stroke:1px #111;">Man</span>
<span class="t" style="left:2579.8px;top:1360.0px;font-size:56.70px;font-weight:700;color:#000;transform:scaleX(0.9533);">RBW Control</span>
<span class="t" style="left:2552.1px;top:1442.0px;font-size:44.51px;font-weight:400;color:#111;transform:scaleX(1.0920);-webkit-text-stroke:1px #111;">[Gaussian,-3 dB]</span>
<span class="t" style="left:36.3px;top:2177.0px;font-size:32.28px;font-weight:400;color:#2a2200;transform:scaleX(1.0235);">MSG</span>
<span class="t" style="left:1897.8px;top:2177.0px;font-size:32.28px;font-weight:400;color:#333;transform:scaleX(1.0336);">STATUS</span>
</body></html>
